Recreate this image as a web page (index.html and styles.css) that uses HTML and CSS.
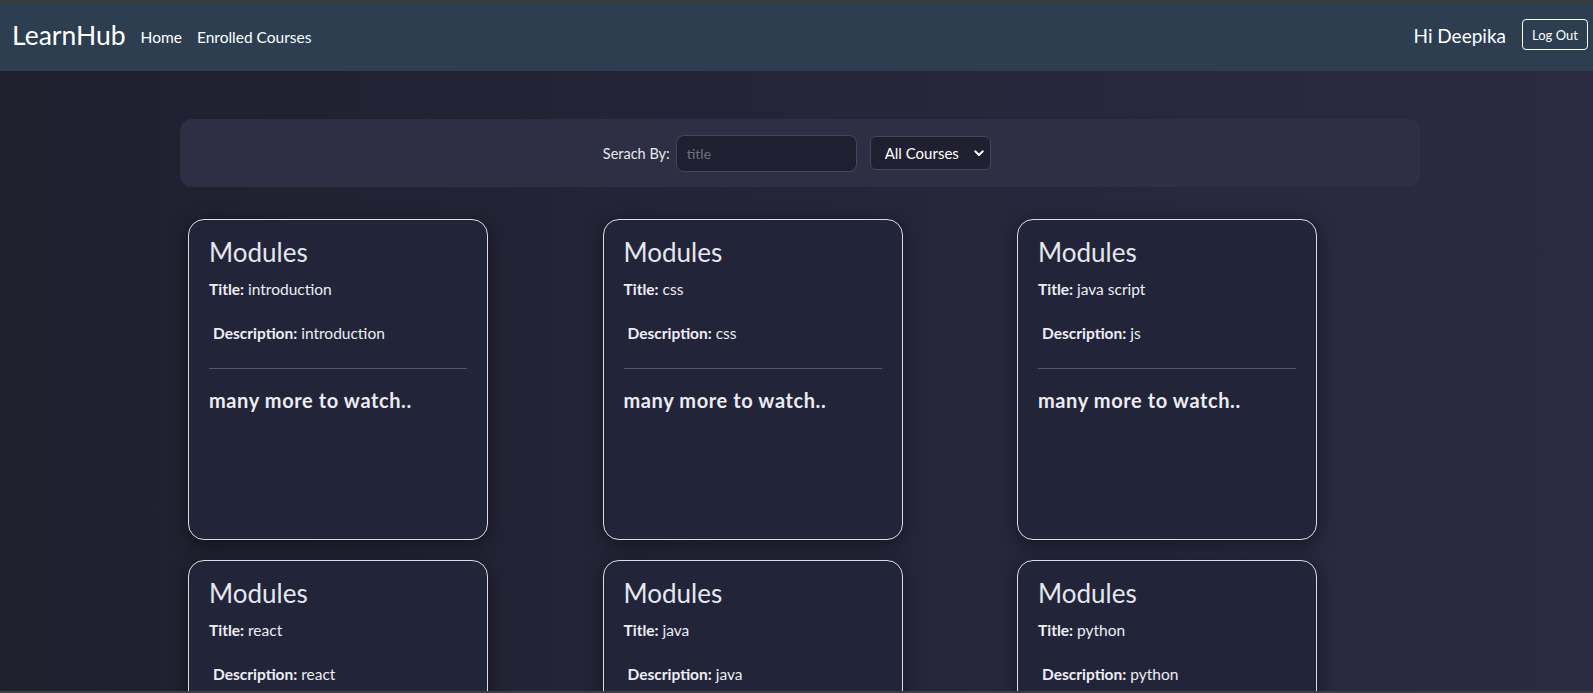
FILE: index.html
```html
<!DOCTYPE html>
<html lang="en">
<head>
<meta charset="utf-8">
<title>LearnHub</title>
<link rel="stylesheet" href="styles.css">
</head>
<body>
<div class="topstrip"></div>
<nav class="navbar">
  <div class="nav-left">
    <span class="brand">LearnHub</span>
    <a class="nav-link" href="#">Home</a>
    <a class="nav-link" href="#">Enrolled Courses</a>
  </div>
  <div class="nav-right">
    <span class="greet">Hi Deepika</span>
    <button class="logout">Log Out</button>
  </div>
</nav>
<main class="container">
  <div class="search-bar">
    <label class="search-label">Serach By:</label>
    <input class="search-input" type="text" placeholder="title">
    <div class="select-wrap">
      <select class="course-select">
        <option>All Courses</option>
      </select>
      <svg class="chev" width="10" height="7" viewBox="0 0 10 7"><path d="M1.2 1.3 L5 5 L8.8 1.3" fill="none" stroke="#ffffff" stroke-width="1.9" stroke-linecap="round" stroke-linejoin="round"/></svg>
    </div>
  </div>
  <div class="grid">
    <div class="card">
      <h3 class="card-title">Modules</h3>
      <p class="line"><b>Title:</b> introduction</p>
      <p class="line desc">&nbsp;<b>Description:</b> introduction</p>
      <hr class="divider">
      <h5 class="more">many more to watch..</h5>
    </div>
    <div class="card">
      <h3 class="card-title">Modules</h3>
      <p class="line"><b>Title:</b> css</p>
      <p class="line desc">&nbsp;<b>Description:</b> css</p>
      <hr class="divider">
      <h5 class="more">many more to watch..</h5>
    </div>
    <div class="card">
      <h3 class="card-title">Modules</h3>
      <p class="line"><b>Title:</b> java script</p>
      <p class="line desc">&nbsp;<b>Description:</b> js</p>
      <hr class="divider">
      <h5 class="more">many more to watch..</h5>
    </div>
    <div class="card">
      <h3 class="card-title">Modules</h3>
      <p class="line"><b>Title:</b> react</p>
      <p class="line desc">&nbsp;<b>Description:</b> react</p>
      <hr class="divider">
      <h5 class="more">many more to watch..</h5>
    </div>
    <div class="card">
      <h3 class="card-title">Modules</h3>
      <p class="line"><b>Title:</b> java</p>
      <p class="line desc">&nbsp;<b>Description:</b> java</p>
      <hr class="divider">
      <h5 class="more">many more to watch..</h5>
    </div>
    <div class="card">
      <h3 class="card-title">Modules</h3>
      <p class="line"><b>Title:</b> python</p>
      <p class="line desc">&nbsp;<b>Description:</b> python</p>
      <hr class="divider">
      <h5 class="more">many more to watch..</h5>
    </div>
  </div>
</main>
<div class="bottomstrip"></div>
</body>
</html>
```
FILE: styles.css
```css
* { box-sizing: border-box; }
html, body { margin: 0; padding: 0; }
body {
  font-family: Lato, "Open Sans", sans-serif;
  color: #ffffff;
  background: linear-gradient(to right, #1f1f2e 0%, #25253a 50%, #2a2a41 100%);
  min-height: 100vh;
  overflow: hidden;
}
.topstrip { height: 3px; background: #3b3b3b; }
.bottomstrip {
  position: fixed; left: 0; right: 0; bottom: 0;
  height: 2px; background: #3f4045;
}
.navbar {
  height: 68px;
  background: #2c3e50;
  display: flex;
  align-items: center;
  justify-content: space-between;
  padding: 0 5px 0 12px;
}
.nav-left { display: flex; align-items: center; }
.brand { font-size: 26.5px; line-height: 30px; margin-right: 15px; margin-top: -5px; }
.nav-link {
  color: #ffffff; text-decoration: none;
  font-size: 15.5px; margin-right: 15px;
}
.nav-right { display: flex; align-items: center; }
.greet { font-size: 19px; margin-right: 16px; margin-top: -3px; }
.logout {
  width: 66px; height: 31px;
  background: transparent;
  border: 1px solid #ffffff;
  border-radius: 4px;
  color: #ffffff;
  font-family: Lato, sans-serif;
  font-size: 13px;
  padding: 0;
  margin-top: -5px;
}
.container { width: 1246px; margin: 48px auto 0; padding-left: 6.5px; }
.search-bar {
  height: 68px;
  background: #2e2e45;
  border-radius: 12px;
  display: flex;
  align-items: center;
  justify-content: center;
  padding-right: 6px;
}
.search-label { font-size: 14.5px; color: #e8e8ee; margin-right: 6px; }
.search-input {
  width: 181px; height: 37px;
  background: #1f1f31;
  border: 1px solid #46465a;
  border-radius: 8px;
  color: #ffffff;
  font-family: Lato, sans-serif;
  font-size: 14px;
  padding: 0 10px;
  outline: none;
  margin-right: 13px;
}
.search-input::placeholder { color: #6f6f80; }
.select-wrap { position: relative; }
.course-select {
  appearance: none; -webkit-appearance: none;
  width: 121px; height: 34px;
  background: #1f1f31;
  border: 1px solid #46465a;
  border-radius: 6px;
  color: #ffffff;
  font-family: Lato, sans-serif;
  font-size: 15px;
  padding: 0 0 0 14px;
}
.chev { position: absolute; right: 7px; top: 14px; pointer-events: none; }
.grid {
  display: grid;
  grid-template-columns: repeat(3, 300px);
  column-gap: 114.5px;
  row-gap: 20px;
  margin-top: 32px;
  padding-left: 8px;
}
.card {
  height: 321px;
  background: #22243a;
  border: 1px solid #dcdce4;
  border-radius: 16px;
  padding: 15px 20px;
  box-shadow: 0 4px 18px rgba(0,0,0,0.45);
}
.card-title {
  margin: 0 0 10px;
  font-size: 26px; line-height: 34px; font-weight: 400;
  color: #e6e6ee;
}
.line { margin: 0; font-size: 15.5px; line-height: 20px; color: #ededf3; }
.line b { font-weight: 700; }
.desc { margin-top: 24px; }
.divider { margin: 25px 0 0; border: 0; border-top: 1px solid #565868; height: 0; }
.more {
  margin: 19px 0 0;
  font-size: 20px; line-height: 24px; font-weight: 700;
  color: #ececf2;
  letter-spacing: 0.6px;
}
```
